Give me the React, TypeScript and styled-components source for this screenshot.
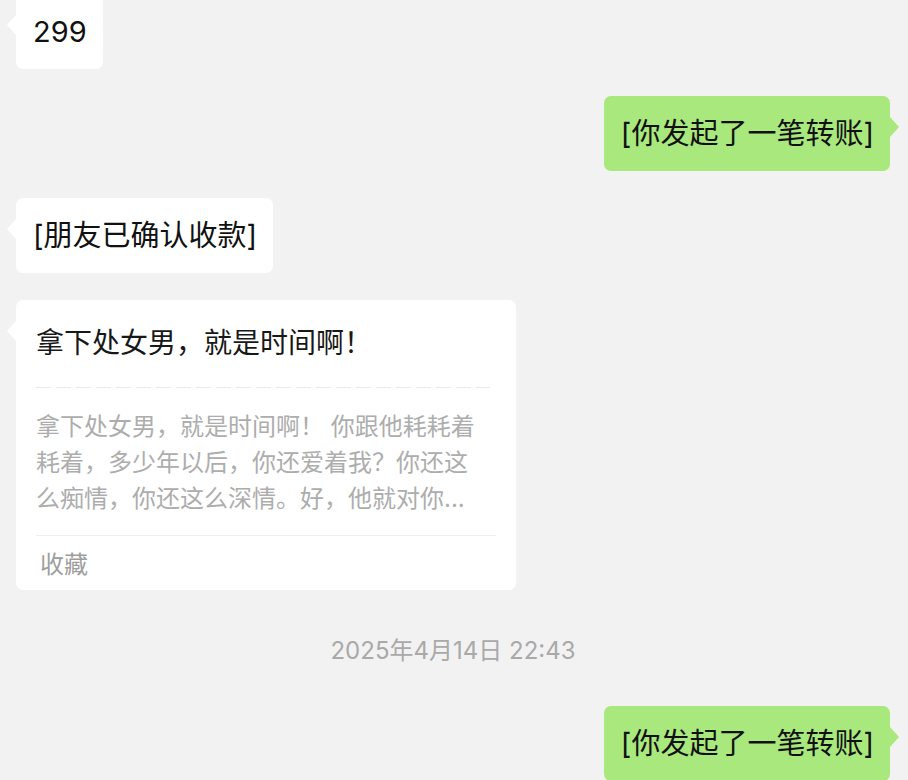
import React from "react";
import styled, { createGlobalStyle, css } from "styled-components";

const GlobalStyle = createGlobalStyle`
  html, body {
    margin: 0;
    padding: 0;
    background: #f2f2f2;
  }
  body {
    font-family: "Inter", "Noto Sans CJK SC", sans-serif;
    overflow: hidden;
  }
`;

type Side = "left" | "right";

const tail = css<{ $side: Side }>`
  &::before {
    content: "";
    position: absolute;
    top: 21px;
    width: 0;
    height: 0;
    border-top: 10px solid transparent;
    border-bottom: 10px solid transparent;
    ${({ $side }) =>
      $side === "left"
        ? css`
            left: -9px;
            border-right: 9px solid #ffffff;
          `
        : css`
            right: -9px;
            border-left: 9px solid #a9e87d;
          `}
  }
`;

const Page = styled.div`
  display: flex;
  flex-direction: column;
  gap: 27px;
  width: 908px;
  box-sizing: border-box;
  padding: 0 18px 0 16px;
  margin-top: -6px;
`;

const Row = styled.div<{ $side: Side }>`
  display: flex;
  justify-content: ${({ $side }) => ($side === "left" ? "flex-start" : "flex-end")};
`;

const Bubble = styled.div<{ $side: Side }>`
  position: relative;
  padding: 18px 16px 18px 17px;
  border-radius: 7px;
  font-size: 29px;
  line-height: 39px;
  color: #111111;
  background: ${({ $side }) => ($side === "left" ? "#ffffff" : "#a9e87d")};
  ${tail}
`;

const Card = styled.div<{ $side: Side }>`
  position: relative;
  width: 500px;
  box-sizing: border-box;
  padding: 25px 20px 10px;
  border-radius: 7px;
  background: #ffffff;
  ${tail}
`;

const CardTop = styled.div`
  padding-right: 6px;
`;

const CardTitle = styled.div`
  font-size: 28px;
  line-height: 36px;
  color: #181818;
`;

const DashedRule = styled.div`
  height: 1px;
  margin: 26px 0 21px;
  background: repeating-linear-gradient(
    to right,
    #e9e9e9 0,
    #e9e9e9 15px,
    transparent 15px,
    transparent 20px
  );
`;

const CardDesc = styled.div`
  padding-right: 6px;
  font-size: 24px;
  line-height: 36px;
  color: #adadad;
`;

const Divider = styled.div`
  height: 1px;
  margin-top: 18px;
  background: #efefef;
`;

const CardFooter = styled.div`
  padding: 14px 0 0 4px;
  font-size: 24px;
  line-height: 30px;
  color: #9e9e9e;
`;

const Timestamp = styled.div`
  padding: 17px 0 11px;
  text-align: center;
  font-size: 24px;
  line-height: 34px;
  color: #a9a9a9;
`;

export default function App() {
  return (
    <>
      <GlobalStyle />
      <Page>
        <Row $side="left">
          <Bubble $side="left">299</Bubble>
        </Row>
        <Row $side="right">
          <Bubble $side="right">[你发起了一笔转账]</Bubble>
        </Row>
        <Row $side="left">
          <Bubble $side="left">[朋友已确认收款]</Bubble>
        </Row>
        <Row $side="left">
          <Card $side="left">
            <CardTop>
              <CardTitle>拿下处女男，就是时间啊！</CardTitle>
              <DashedRule />
              <CardDesc>
                拿下处女男，就是时间啊！ 你跟他耗耗着耗着，多少年以后，你还爱着我？你还这么痴情，你还这么深情。好，他就对你...
              </CardDesc>
            </CardTop>
            <Divider />
            <CardFooter>收藏</CardFooter>
          </Card>
        </Row>
        <Timestamp>2025年4月14日 22:43</Timestamp>
        <Row $side="right">
          <Bubble $side="right">[你发起了一笔转账]</Bubble>
        </Row>
      </Page>
    </>
  );
}
